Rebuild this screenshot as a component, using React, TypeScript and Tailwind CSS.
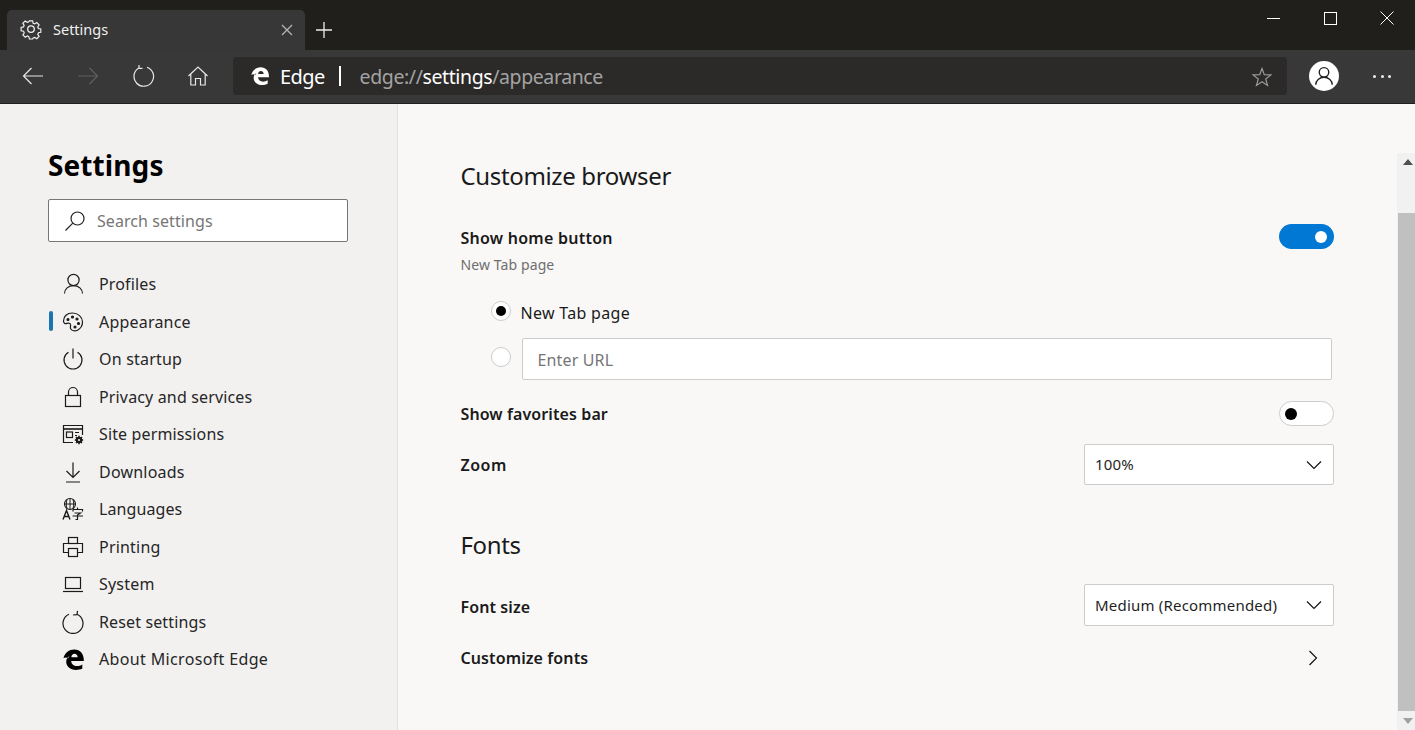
import React from "react";

const EdgeLogo = ({ size, color }: { size: number; color: string }) => (
  <svg width={size} height={size} viewBox="0 0 24 24" fill={color}>
    <path fillRule="evenodd" d="M1.5 10.8C3 5 7.5 1.6 12.8 1.6C19 1.6 23 6 22.8 13.6L9.6 13.6C9.8 17 12.4 18.8 15.6 18.8C17.6 18.8 19.5 18.2 21.2 17.2L21.2 21.4C19.2 22.4 17 22.9 14.4 22.9C8.6 22.9 4.4 19.2 4.4 14.4C4.4 11.8 5.6 9.6 8 8.2C7 9.2 6.5 10.1 6.3 11C5 9.8 3.2 9.6 1.5 10.8ZM9.7 9.6L16.4 9.6C16.3 7.4 14.9 6 13 6C11.2 6 10 7.4 9.7 9.6Z" />
  </svg>
);

const I = ({ children, size = 24, className = "" }: { children: React.ReactNode; size?: number; className?: string }) => (
  <svg width={size} height={size} viewBox="0 0 24 24" fill="none" stroke="currentColor" strokeWidth="1.2" className={className}>
    {children}
  </svg>
);

const navItems: { label: string; track: string; icon: React.ReactNode }[] = [
  { label: "Profiles", track: "tracking-[0.15px]", icon: <I><circle cx="12.5" cy="8" r="5.6" /><path d="M3.5 21.5C3.5 17 7.5 13.6 12.5 13.6S21.5 17 21.5 21.5" /></I> },
  {
    label: "Appearance",
    track: "tracking-[0.2px]",
    icon: (
      <I>
        <path d="M11.5 3C6 3 2.5 6.5 2.5 11C2.5 13 4 14 5.8 13.4C7.5 12.8 9.5 13.2 9.6 15C9.7 16.6 8.8 17.5 9.8 19C11 20.8 14 21.5 16.5 20.2C19.5 18.6 21.5 15.5 21.5 12C21.5 7 17 3 11.5 3Z" />
        <circle cx="7" cy="9.5" r="1" fill="currentColor" />
        <circle cx="11.5" cy="7" r="1" fill="currentColor" />
        <circle cx="16" cy="9" r="1" fill="currentColor" />
        <circle cx="17.5" cy="13.5" r="1" fill="currentColor" />
        <circle cx="14" cy="17" r="1" fill="currentColor" />
      </I>
    ),
  },
  { label: "On startup", track: "tracking-[0.2px]", icon: <I><path d="M7.5 5.2A9 9 0 1 0 16.5 5.2" /><path d="M12 1.5V11.5" /></I> },
  { label: "Privacy and services", track: "tracking-[0.15px]", icon: <I><rect x="4.5" y="10.5" width="15" height="11" /><path d="M7.5 10.5V7A4.5 4.5 0 0 1 16.5 7V10.5" /></I> },
  {
    label: "Site permissions",
    track: "tracking-[0.13px]",
    icon: (
      <I>
        <path d="M12 20.5H2.5V3.5H21.5V13" />
        <path d="M2.5 7H21.5" strokeWidth="1.6" />
        <rect x="5.5" y="10" width="6" height="5.5" />
        <path d="M14 10.5H18M14 13.5H16" />
        <circle cx="18" cy="18" r="2.2" strokeWidth="2.2" />
        <path d="M18 13.8V15M18 21V22.2M13.8 18H15M21 18H22.2M15 15L15.9 15.9M20.1 20.1L21 21M21 15L20.1 15.9M15.9 20.1L15 21" strokeWidth="1.5" />
      </I>
    ),
  },
  { label: "Downloads", track: "tracking-[0.2px]", icon: <I><path d="M12 2.5V17.5M5.5 11L12 17.5L18.5 11M5 22H19" /></I> },
  {
    label: "Languages",
    track: "tracking-[0.1px]",
    icon: (
      <I>
        <circle cx="9" cy="7" r="5.5" strokeWidth="1.1" />
        <path d="M3.5 7H14.5M9 1.5V12.5M6 2.5C5 6 5 8 6 11.5M12 2.5C13 6 13 8 12 11.5" strokeWidth="1" />
        <path d="M2 22.5L5.5 13.5L9 22.5M3.2 19.5H7.8" strokeWidth="1.4" />
        <path d="M16.5 10.5V12.5M12 12.5H21.5V14.5M12 12.5V14.5M13.5 16H19.5L16.5 18V22.5H14.5M11.5 19H22" strokeWidth="1.2" />
      </I>
    ),
  },
  {
    label: "Printing",
    track: "tracking-[0.2px]",
    icon: (
      <I>
        <rect x="7.5" y="2.5" width="9" height="6" />
        <path d="M7.5 17.5H2.5V8.5H21.5V17.5H16.5" />
        <rect x="7.5" y="13.5" width="9" height="8" />
      </I>
    ),
  },
  { label: "System", track: "tracking-[0.2px]", icon: <I><rect x="4.5" y="5.5" width="15" height="11" /><path d="M2 19.5H22" /></I> },
  { label: "Reset settings", track: "tracking-[0.13px]", icon: <I><path d="M8 4.3A10 10 0 1 0 16 4.3" /><path d="M16.5 0.8L16 4.6L12 5" /></I> },
  { label: "About Microsoft Edge", track: "tracking-[0.35px]", icon: <EdgeLogo size={23} color="#000" /> },
];

const Toggle = ({ on }: { on: boolean }) =>
  on ? (
    <div className="flex h-[25px] w-[55px] items-center justify-end rounded-full bg-[#0078d4] pr-[7px]">
      <div className="h-[12px] w-[12px] rounded-full bg-white" />
    </div>
  ) : (
    <div className="flex h-[25px] w-[55px] items-center rounded-full border border-[#cccccc] bg-white pl-[5px]">
      <div className="h-[12px] w-[12px] rounded-full bg-black" />
    </div>
  );

const Chevron = () => (
  <svg width="16" height="10" viewBox="0 0 16 10" fill="none" stroke="#111" strokeWidth="1.15">
    <path d="M1 1.5L8 8.5L15 1.5" />
  </svg>
);

const Select = ({ value, h }: { value: string; h: string }) => (
  <div className={`flex w-[250px] items-center justify-between rounded-[2px] border border-[#cccccc] bg-white pl-[10px] pr-[11px] text-[15px] tracking-[0.2px] text-[#1f1f1f] ${h}`}>
    <span>{value}</span>
    <Chevron />
  </div>
);

export default function App() {
  return (
    <div className="flex h-[730px] w-[1415px] flex-col overflow-hidden bg-[#f9f8f7] font-['Noto_Sans','Open_Sans',sans-serif]">
      {/* Title bar */}
      <div className="flex h-[50px] shrink-0 items-end bg-[#201f1c] pl-[7px]">
        <div className="flex h-[40px] w-[298px] items-center rounded-t-[5px] bg-[#373737] pl-[13px] pr-[12px] text-[#f0f0f0]">
          <svg width="22" height="22" viewBox="0 0 24 24" fill="none" stroke="#f2f2f2" strokeWidth="1.4">
            <path d="M10 2h4l.6 2.9 1.9.8 2.5-1.6 2.8 2.8-1.6 2.5.8 1.9 2.9.6v4l-2.9.6-.8 1.9 1.6 2.5-2.8 2.8-2.5-1.6-1.9.8L14 24h-4l-.6-2.9-1.9-.8-2.5 1.6-2.8-2.8 1.6-2.5-.8-1.9L0 14v-4l2.9-.6.8-1.9-1.6-2.5 2.8-2.8 2.5 1.6 1.9-.8z" transform="translate(1.2 .2) scale(.9)" />
            <circle cx="12" cy="11" r="3.6" />
          </svg>
          <span className="mb-[1px] ml-[11px] text-[14.5px]">Settings</span>
          <svg className="ml-auto" width="12" height="12" viewBox="0 0 12 12" stroke="#b5b5b5" strokeWidth="1.3">
            <path d="M1 1L11 11M11 1L1 11" />
          </svg>
        </div>
        <div className="flex h-[40px] w-[38px] items-center justify-center">
          <svg width="18" height="18" viewBox="0 0 18 18" stroke="#eee" strokeWidth="1.3">
            <path d="M1 9H17M9 1V17" />
          </svg>
        </div>
        <div className="ml-auto flex h-[50px] self-start pb-[14px] text-white">
          <div className="flex w-[56.5px] items-center justify-center pr-[1px]">
            <div className="h-[1px] w-[13px] bg-white" />
          </div>
          <div className="flex w-[56.5px] items-center justify-center">
            <div className="h-[13px] w-[13px] border border-white" />
          </div>
          <div className="flex w-[56.5px] items-center justify-center">
            <svg width="14" height="14" viewBox="0 0 14 14" stroke="#fff" strokeWidth="1">
              <path d="M.5 .5L13.5 13.5M13.5 .5L.5 13.5" />
            </svg>
          </div>
        </div>
      </div>

      {/* Toolbar */}
      <div className="flex h-[54px] shrink-0 items-center border-b border-[#1f1f1f] bg-[#383838] pl-[5.5px] pb-[1px] text-[#eeeeee]">
        <div className="flex w-[55px] items-center justify-center">
          <svg width="22" height="18" viewBox="0 0 22 18" fill="none" stroke="#e8e8e8" strokeWidth="1.2"><path d="M21 9H1.5M9.5 1L1.5 9L9.5 17" /></svg>
        </div>
        <div className="flex w-[55px] items-center justify-center">
          <svg width="22" height="18" viewBox="0 0 22 18" fill="none" stroke="#5f5f5f" strokeWidth="1.2"><path d="M1 9H20.5M12.5 1L20.5 9L12.5 17" /></svg>
        </div>
        <div className="flex w-[55px] items-center justify-center pr-[1px]">
          <svg width="24" height="24" viewBox="0 0 24 24" fill="none" stroke="#e8e8e8" strokeWidth="1.2"><path d="M7.8 4A9.8 9.8 0 1 0 16 3.2" /><path d="M8 1L8 4.4L11.5 4.4" /></svg>
        </div>
        <div className="flex w-[55px] items-center justify-center">
          <svg width="22" height="22" viewBox="0 0 22 22" fill="none" stroke="#e8e8e8" strokeWidth="1.2"><path d="M1.5 11L11 2L20.5 11M3.8 9V20H8.5V13.5H13.5V20H18.2V9" /></svg>
        </div>
        <div className="ml-[7.5px] flex h-[38px] w-[1054px] items-center rounded-[4px] bg-[#2b2a28] pl-[17px] pr-[15px]">
          <EdgeLogo size={20} color="#ffffff" />
          <span className="ml-[10px] mt-[1px] text-[20px] tracking-[-0.6px] text-white">Edge</span>
          <div className="ml-[14px] h-[20px] w-[2px] bg-white" />
          <span className="ml-[19px] mt-[1px] text-[19.5px] tracking-[-0.4px] text-[#a3a3a3]">
            edge://<span className="text-white">settings</span>/appearance
          </span>
          <svg className="ml-auto mt-[1px]" width="20" height="20" viewBox="0 0 20 20" fill="none" stroke="#9a9a9a" strokeWidth="1.2">
            <path d="M10 1.5L12.3 7.6L18.9 7.9L13.7 12L15.5 18.4L10 14.7L4.5 18.4L6.3 12L1.1 7.9L7.7 7.6Z" />
          </svg>
        </div>
        <div className="ml-[9.5px] flex w-[55px] items-center justify-center">
          <div className="flex h-[30px] w-[30px] items-center justify-center rounded-full bg-white">
            <svg width="22" height="22" viewBox="0 0 24 24" fill="none" stroke="#222" strokeWidth="1.5">
              <circle cx="12" cy="8" r="5.2" />
              <path d="M3 21.5C3 17 7 13.4 12 13.4S21 17 21 21.5" />
            </svg>
          </div>
        </div>
        <div className="ml-[3px] flex w-[55px] items-center justify-center gap-[4.5px]">
          <div className="h-[3px] w-[3px] rounded-full bg-[#eeeeee]" />
          <div className="h-[3px] w-[3px] rounded-full bg-[#eeeeee]" />
          <div className="h-[3px] w-[3px] rounded-full bg-[#eeeeee]" />
        </div>
      </div>

      <div className="flex min-h-0 flex-1">
        {/* Sidebar */}
        <aside className="relative w-[398px] shrink-0 border-r border-[#e1dfdd] bg-[#f2f1f0] pt-[41px]">
          <h1 className="flex h-[40px] items-center pl-[48px] text-[28px] font-bold tracking-[0.1px] text-black">Settings</h1>
          <div className="ml-[48px] mt-[14px] flex h-[43px] w-[300px] items-center rounded-[2px] border border-[#767676] bg-white pl-[15px] text-[16px] tracking-[0.07px] text-[#767676]">
            <svg width="22" height="22" viewBox="0 0 22 22" fill="none" stroke="#222" strokeWidth="1.2">
              <circle cx="13.5" cy="8.5" r="6.5" />
              <path d="M8.8 13.2L1.5 20.5" />
            </svg>
            <span className="ml-[11px]">Search settings</span>
          </div>
          <nav className="mt-[23.5px]">
            {navItems.map((n) => (
              <div key={n.label} className={`relative flex h-[37.5px] items-center pl-[61px] text-[16px] text-[#262626] ${n.track}`}>
                {n.label === "Appearance" && (
                  <div className="absolute left-[49px] top-[8px] h-[20px] w-[4px] rounded-full bg-[#1a74b4]" />
                )}
                <span className="flex h-[24px] w-[24px] items-center justify-center text-[#1a1a1a]">{n.icon}</span>
                <span className="ml-[14px]">{n.label}</span>
              </div>
            ))}
          </nav>
        </aside>

        {/* Main */}
        <main className="flex-1 pl-[62.5px] pr-[63px] pt-[52px] text-[#1a1a1a]">
          <h2 className="flex h-[40px] items-center text-[24px] tracking-[-0.35px] text-[#1a1a1a]">Customize browser</h2>
          <div className="mt-[28px] flex h-[25px] items-center justify-between">
            <span className="mt-[3px] text-[16px] font-semibold tracking-[0.25px]">Show home button</span>
            <Toggle on />
          </div>
          <div className="mt-[6px] h-[20px] text-[14px] leading-[20px] tracking-[0.1px] text-[#6e6e6e]">New Tab page</div>
          <div className="mt-[26px] flex h-[20px] items-center pl-[30px]">
            <div className="flex h-[20px] w-[20px] items-center justify-center rounded-full border border-[#cccccc] bg-white">
              <div className="h-[10px] w-[10px] rounded-full bg-black" />
            </div>
            <span className="ml-[10px] mt-[4px] text-[16px] tracking-[0.3px]">New Tab page</span>
          </div>
          <div className="mt-[17px] flex h-[42px] pl-[30px]">
            <div className="mt-[9px] h-[20px] w-[20px] rounded-full border border-[#cccccc] bg-white" />
            <div className="ml-[11px] flex h-[42px] w-[810px] items-center rounded-[2px] border border-[#cccccc] bg-white pl-[15px] pt-[2px] text-[16px] tracking-[0.15px] text-[#767676]">Enter URL</div>
          </div>
          <div className="mt-[21px] flex h-[25px] items-center justify-between">
            <span className="text-[16px] font-semibold tracking-[0.1px]">Show favorites bar</span>
            <Toggle on={false} />
          </div>
          <div className="mt-[18px] flex h-[41px] items-center justify-between">
            <span className="text-[16px] font-semibold tracking-[0.5px]">Zoom</span>
            <Select value="100%" h="h-[41px]" />
          </div>
          <h2 className="mt-[40px] flex h-[40px] items-center text-[24px] tracking-[-0.38px]">Fonts</h2>
          <div className="mt-[19px] flex h-[42px] items-center justify-between">
            <span className="mt-[3px] text-[16px] font-semibold tracking-[0.1px]">Font size</span>
            <Select value="Medium (Recommended)" h="h-[42px]" />
          </div>
          <div className="mt-[18px] flex h-[28px] items-center justify-between pr-[16px]">
            <span className="text-[16px] font-semibold tracking-[0.1px]">Customize fonts</span>
            <svg width="10" height="16" viewBox="0 0 10 16" fill="none" stroke="#111" strokeWidth="1.15"><path d="M1.5 1L8.5 8L1.5 15" /></svg>
          </div>
        </main>

        {/* Scrollbar */}
        <div className="mt-[49px] flex w-[18px] shrink-0 flex-col items-end bg-[#f1f1f1]">
          <div className="flex h-[17px] w-full shrink-0 items-center justify-center pl-[4px] text-[#505050]">
            <svg width="10" height="6" viewBox="0 0 10 6" fill="currentColor"><path d="M5 0L10 6H0Z" /></svg>
          </div>
          <div className="mt-[43px] w-[17px] flex-1 bg-[#c0c0c0]" />
          <div className="flex h-[19px] w-full shrink-0 items-center justify-center pl-[4px] text-[#a0a0a0]">
            <svg width="10" height="6" viewBox="0 0 10 6" fill="currentColor"><path d="M5 6L10 0H0Z" /></svg>
          </div>
        </div>
      </div>
    </div>
  );
}
